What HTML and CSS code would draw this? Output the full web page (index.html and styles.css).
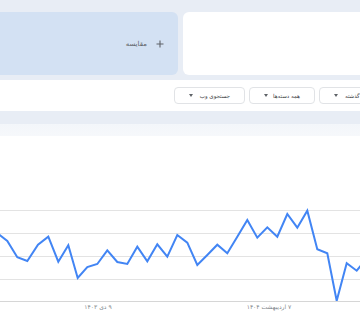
FILE: index.html
```html
<!DOCTYPE html>
<html lang="fa">
<head>
<meta charset="utf-8">
<link rel="stylesheet" href="styles.css">
</head>
<body>
<div class="page">
  <div class="top">
    <div class="card compare">
      <span class="compare-label">مقایسه</span>
      <svg class="plus" width="8" height="8" viewBox="0 0 8 8"><path d="M4 0.5V7.5M0.5 4H7.5" stroke="#5f6368" stroke-width="1.1" fill="none"/></svg>
    </div>
    <div class="card term"></div>
  </div>
  <div class="filters">
    <div class="chip chip-web"><span class="arrow"></span><span class="chip-text">جستجوی وب</span></div>
    <div class="chip chip-cat"><span class="arrow"></span><span class="chip-text">همه دسته‌ها</span></div>
    <div class="chip chip-time"><span class="arrow"></span><span class="chip-text">۱۲ ماه گذشته</span></div>
  </div>
  <div class="band"></div>
  <div class="chart-card">
    <svg class="chart" width="360" height="196" viewBox="0 0 360 196">
      <g stroke="#e3e3e3" stroke-width="1">
        <line x1="0" y1="86.5" x2="360" y2="86.5"/>
        <line x1="0" y1="109.5" x2="360" y2="109.5"/>
        <line x1="0" y1="132.5" x2="360" y2="132.5"/>
        <line x1="0" y1="155.5" x2="360" y2="155.5"/>
      </g>
      <line x1="0" y1="177.5" x2="360" y2="177.5" stroke="#d6d6d6" stroke-width="1"/>
      <polyline fill="none" stroke="#4285f4" stroke-width="2" stroke-linejoin="miter" points="-2.7,109 7.3,117 17.3,133.3 27.3,137 38,120.7 48.3,112.7 58.3,137.7 68.3,121.3 77.7,154 87.3,143 97.3,140 107.3,126.3 117.3,138 127.3,140 137.3,122.7 147.3,137.3 157.3,120.3 167.3,132.7 177.3,111 187.3,118.7 197.3,141 207.3,131 217.3,120.7 227.3,129.3 237.3,112.7 247.3,96 257.3,113.7 267.3,103.3 277.3,112.7 287.3,90 297.3,103.7 307.3,86.7 317.3,125.3 327.3,129.3 336.7,176.7 346.7,139.3 356.7,146.7 366.7,134"/>
      <text class="axis" x="98" y="185" text-anchor="middle" direction="rtl">۹ دی ۱۴۰۳</text>
      <text class="axis" x="269" y="185" text-anchor="middle" direction="rtl">۷ اردیبهشت ۱۴۰۴</text>
    </svg>
  </div>
</div>
</body>
</html>
```
FILE: styles.css
```css
html, body {
  margin: 0;
  padding: 0;
  background: #ffffff;
}
body {
  width: 360px;
  height: 320px;
  overflow: hidden;
  font-family: "DejaVu Sans", "Noto Sans", sans-serif;
}
.page {
  width: 360px;
  overflow: hidden;
}
.top {
  background: #e8edf5;
  padding: 12px 0 5px;
  display: flex;
  gap: 5px;
  height: 63px;
}
.card {
  border-radius: 6px;
  height: 63px;
}
.compare {
  background: #d3e1f3;
  width: 190px;
  margin-left: -12px;
  flex: none;
  display: flex;
  align-items: center;
  justify-content: flex-end;
  gap: 9px;
  padding-right: 14px;
  box-sizing: border-box;
}
.compare-label {
  font-size: 7px;
  color: #5f6368;
  direction: rtl;
}
.plus {
  display: block;
}
.term {
  background: #ffffff;
  flex: none;
  width: 200px;
}
.filters {
  height: 31px;
  box-sizing: border-box;
  padding: 7px 0 0 174px;
  display: flex;
  gap: 4px;
  background: #ffffff;
}
.chip {
  flex: none;
  height: 17px;
  box-sizing: border-box;
  border: 1px solid #e1e3e6;
  border-radius: 4px;
  display: flex;
  align-items: center;
  justify-content: space-between;
  padding: 0 14px;
  background: #ffffff;
}
.chip-web { width: 71px; }
.chip-cat { width: 66px; }
.chip-time { width: 90px; justify-content: flex-start; gap: 7px; }
.chip-text {
  font-size: 5.5px;
  color: #3c4043;
  direction: rtl;
  white-space: nowrap;
}
.arrow {
  width: 0;
  height: 0;
  border-left: 2.5px solid transparent;
  border-right: 2.5px solid transparent;
  border-top: 3px solid #5f6368;
  flex: none;
}
.band {
  height: 13px;
  background: #e8edf5;
}
.chart-card {
  background: linear-gradient(#f3f6fa 0, #f6f8fb 12px, #ffffff 12px);
  height: 196px;
}
.chart {
  display: block;
}
.axis {
  font-family: "DejaVu Sans", sans-serif;
  font-size: 6px;
  fill: #80868b;
  direction: rtl;
  unicode-bidi: embed;
}
```
